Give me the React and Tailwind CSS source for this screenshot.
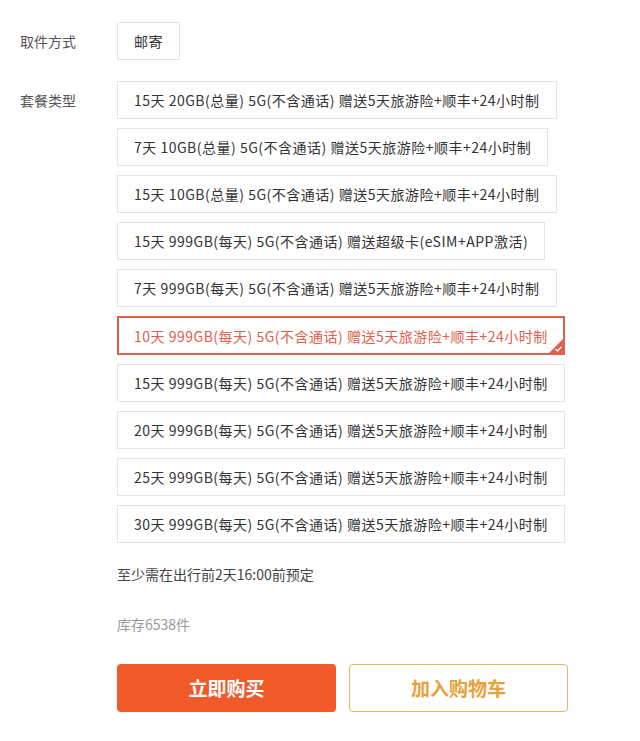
import React, { useState } from 'react';

const plans = [
  '15天 20GB(总量) 5G(不含通话) 赠送5天旅游险+顺丰+24小时制',
  '7天 10GB(总量) 5G(不含通话) 赠送5天旅游险+顺丰+24小时制',
  '15天 10GB(总量) 5G(不含通话) 赠送5天旅游险+顺丰+24小时制',
  '15天 999GB(每天) 5G(不含通话) 赠送超级卡(eSIM+APP激活)',
  '7天 999GB(每天) 5G(不含通话) 赠送5天旅游险+顺丰+24小时制',
  '10天 999GB(每天) 5G(不含通话) 赠送5天旅游险+顺丰+24小时制',
  '15天 999GB(每天) 5G(不含通话) 赠送5天旅游险+顺丰+24小时制',
  '20天 999GB(每天) 5G(不含通话) 赠送5天旅游险+顺丰+24小时制',
  '25天 999GB(每天) 5G(不含通话) 赠送5天旅游险+顺丰+24小时制',
  '30天 999GB(每天) 5G(不含通话) 赠送5天旅游险+顺丰+24小时制',
];

export default function App() {
  const [selected, setSelected] = useState(5);

  return (
    <div
      className="w-[640px] min-h-[741px] bg-white pt-[22px] text-[14px] leading-[20px] text-[#333]"
      style={{ fontFamily: '"Noto Sans CJK SC", "Noto Sans", sans-serif' }}
    >
      {/* 取件方式 */}
      <div className="flex">
        <div className="w-[117px] pl-[20px] h-[38px] flex items-center text-[#555]">取件方式</div>
        <div className="h-[38px] px-[16px] flex items-center border border-[#e5e5e5] tracking-[0.4px]">邮寄</div>
      </div>

      {/* 套餐类型 */}
      <div className="flex mt-[21px]">
        <div className="w-[117px] pl-[20px] h-[38px] flex items-center text-[#555] shrink-0">套餐类型</div>
        <div className="flex flex-col items-start gap-[9px] tracking-[0.5px]">
          {plans.map((p, i) =>
            i === selected ? (
              <button
                key={i}
                onClick={() => setSelected(i)}
                className="relative h-[39px] px-[15px] flex items-center border-2 border-[#e0604a] text-[#e0604a] whitespace-nowrap"
              >
                {p}
                <span className="absolute right-0 bottom-0 w-0 h-0 border-l-[14px] border-l-transparent border-b-[14px] border-b-[#e0604a]" />
                <svg className="absolute right-[1px] bottom-[1px]" width="7" height="6" viewBox="0 0 7 6">
                  <path d="M0.5 3 L2.5 5 L6.5 0.8" stroke="#fff" strokeWidth="1.4" fill="none" />
                </svg>
              </button>
            ) : (
              <button
                key={i}
                onClick={() => setSelected(i)}
                className="h-[38px] px-[16px] flex items-center border border-[#e5e5e5] whitespace-nowrap"
              >
                {p}
              </button>
            )
          )}
        </div>
      </div>

      <div className="pl-[117px] mt-[21px] text-[#444]">至少需在出行前2天16:00前预定</div>
      <div className="pl-[117px] mt-[30px] text-[#999]">库存6538件</div>

      <div className="pl-[117px] mt-[30px] flex gap-[13px]">
        <button className="w-[219px] h-[48px] rounded-[4px] bg-[#f05a28] text-white text-[19px] font-bold">立即购买</button>
        <button className="w-[219px] h-[48px] rounded-[4px] border border-[#e3b66a] text-[#e6a23a] text-[19px] font-bold">加入购物车</button>
      </div>
    </div>
  );
}
